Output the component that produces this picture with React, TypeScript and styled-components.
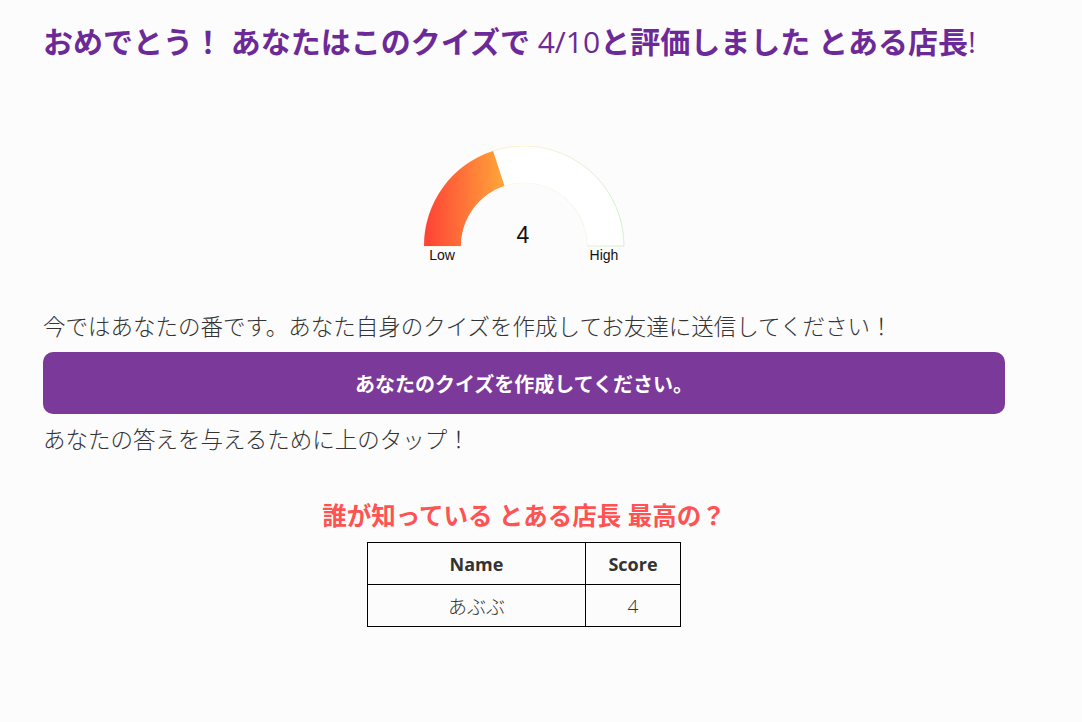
import React from 'react';
import styled, { createGlobalStyle } from 'styled-components';

const GlobalStyle = createGlobalStyle`
  html, body {
    margin: 0;
    padding: 0;
    background: #fcfcfc;
  }
  body {
    font-family: "Open Sans", "Noto Sans CJK JP", sans-serif;
    color: #333;
  }
`;

const Page = styled.div`
  width: 962px;
  margin: 0 0 0 43px;
  padding-top: 24px;
  display: flex;
  flex-direction: column;
`;

const Title = styled.h1`
  margin: 0;
  font-size: 30px;
  line-height: 36px;
  font-weight: 700;
  color: #6c2a98;
  white-space: nowrap;
`;

const Light = styled.span`
  font-weight: 400;
`;

const GaugeWrap = styled.div`
  margin-top: 86px;
  display: flex;
  justify-content: center;
`;

const Text = styled.p`
  margin: 0;
  font-size: 22.5px;
  line-height: 33px;
  font-weight: 300;
  color: #333;
`;

const Button = styled.button`
  height: 62px;
  width: 100%;
  border: none;
  border-radius: 10px;
  background: #7b3a9a;
  color: #fff;
  font-family: inherit;
  font-size: 20px;
  font-weight: 700;
  cursor: pointer;
`;

const Spaced = styled.div<{ top: number }>`
  margin-top: ${p => p.top}px;
`;

const LeaderTitle = styled.h2`
  margin: 45px 0 0;
  font-size: 24.5px;
  line-height: 29px;
  font-weight: 700;
  color: #ff5252;
  text-align: center;
`;

const Table = styled.table`
  margin: 12px auto 0;
  border-collapse: collapse;
  font-size: 18px;
  color: #333;
`;

const Th = styled.th<{ w: number }>`
  width: ${p => p.w}px;
  height: 41px;
  border: 1px solid #000;
  font-weight: 700;
  text-align: center;
  padding: 0;
`;

const Td = styled.td`
  height: 41px;
  border: 1px solid #000;
  text-align: center;
  font-size: 19px;
  font-weight: 300;
  padding: 0;
`;

const Gauge: React.FC<{ value: number; max: number }> = ({ value, max }) => {
  const cx = 110;
  const cy = 100;
  const R = 100;
  const r = 63;
  const t = (value / max) * Math.PI;
  const ox = cx - R * Math.cos(t);
  const oy = cy - R * Math.sin(t);
  const ix = cx - r * Math.cos(t);
  const iy = cy - r * Math.sin(t);
  return (
    <svg width="220" height="120" viewBox="0 0 220 120">
      <defs>
        <linearGradient id="fill" x1="10" y1="0" x2="85" y2="0" gradientUnits="userSpaceOnUse">
          <stop offset="0" stopColor="#ff4136" />
          <stop offset="1" stopColor="#ffa03a" />
        </linearGradient>
        <linearGradient id="edge" x1="10" y1="0" x2="210" y2="0" gradientUnits="userSpaceOnUse">
          <stop offset="0" stopColor="#ffd2a0" />
          <stop offset="0.5" stopColor="#ffe9b0" />
          <stop offset="1" stopColor="#b8e6b0" />
        </linearGradient>
      </defs>
      <path
        d={`M ${cx - R} ${cy} A ${R} ${R} 0 0 1 ${cx + R} ${cy} L ${cx + r} ${cy} A ${r} ${r} 0 0 0 ${cx - r} ${cy} Z`}
        fill="#fff"
        stroke="url(#edge)"
        strokeWidth="0.6"
      />
      <path
        d={`M ${cx - R} ${cy} A ${R} ${R} 0 0 1 ${ox} ${oy} L ${ix} ${iy} A ${r} ${r} 0 0 0 ${cx - r} ${cy} Z`}
        fill="url(#fill)"
      />
      <path d={`M ${cx + r} ${cy} A ${r} ${r} 0 0 0 ${cx - r} ${cy} Z`} fill="#fcfcfc" />
      <text x={cx - 1} y={97} textAnchor="middle" fontFamily="Liberation Sans, Arial, sans-serif" fontSize="23" fill="#111">
        {value}
      </text>
      <text x={28} y={114} textAnchor="middle" fontFamily="Liberation Sans, Arial, sans-serif" fontSize="14" fill="#111">
        Low
      </text>
      <text x={190} y={114} textAnchor="middle" fontFamily="Liberation Sans, Arial, sans-serif" fontSize="14" fill="#111">
        High
      </text>
    </svg>
  );
};

const App: React.FC = () => {
  return (
    <>
      <GlobalStyle />
      <Page>
        <Title>
          おめでとう！ あなたはこのクイズで <Light>4/10</Light>と評価しました とある店長<Light>!</Light>
        </Title>
        <GaugeWrap>
          <Gauge value={4} max={10} />
        </GaugeWrap>
        <Spaced top={44}>
          <Text>今ではあなたの番です。あなた自身のクイズを作成してお友達に送信してください！</Text>
        </Spaced>
        <Spaced top={9}>
          <Button>あなたのクイズを作成してください。</Button>
        </Spaced>
        <Spaced top={9}>
          <Text>あなたの答えを与えるために上のタップ！</Text>
        </Spaced>
        <LeaderTitle>誰が知っている とある店長 最高の？</LeaderTitle>
        <Table>
          <thead>
            <tr>
              <Th w={217}>Name</Th>
              <Th w={94}>Score</Th>
            </tr>
          </thead>
          <tbody>
            <tr>
              <Td>あぶぶ</Td>
              <Td>4</Td>
            </tr>
          </tbody>
        </Table>
      </Page>
    </>
  );
};

export default App;
